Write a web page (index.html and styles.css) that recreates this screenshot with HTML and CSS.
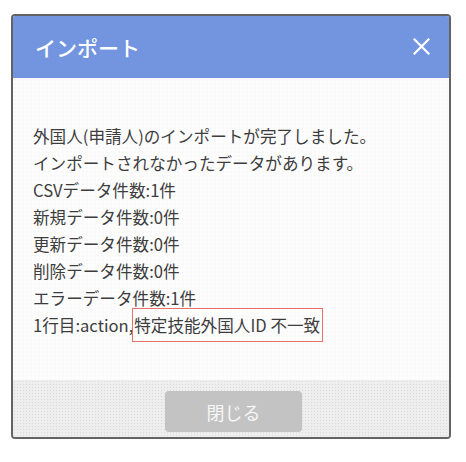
FILE: index.html
```html
<!DOCTYPE html>
<html lang="ja">
<head>
<meta charset="utf-8">
<title>インポート</title>
<link rel="stylesheet" href="styles.css">
</head>
<body>
<div class="modal">
  <div class="modal-header">
    <h1 class="modal-title">インポート</h1>
    <button class="close-btn" aria-label="閉じる">
      <svg width="17" height="17" viewBox="0 0 17 17"><path d="M1.5 1.5 L15.5 15.5 M15.5 1.5 L1.5 15.5" stroke="#fff" stroke-width="2.2" stroke-linecap="square" fill="none"/></svg>
    </button>
  </div>
  <div class="modal-body">
    <p class="line">外国人(申請人)のインポートが完了しました。</p>
    <p class="line">インポートされなかったデータがあります。</p>
    <p class="line">CSVデータ件数:1件</p>
    <p class="line">新規データ件数:0件</p>
    <p class="line">更新データ件数:0件</p>
    <p class="line">削除データ件数:0件</p>
    <p class="line">エラーデータ件数:1件</p>
    <p class="line">1行目:action,<span class="error">特定技能外国人ID 不一致</span></p>
  </div>
  <div class="modal-footer">
    <button class="btn-close">閉じる</button>
  </div>
</div>
</body>
</html>
```

FILE: styles.css
```css
* { box-sizing: border-box; }
html, body { margin: 0; padding: 0; background: #fff; }
body {
  font-family: "Noto Sans CJK JP", "Noto Sans", sans-serif;
  padding: 14px 0 0 11px;
}
.modal {
  width: 440px;
  border: 2px solid #636363;
  border-radius: 4px;
  overflow: hidden;
  background: #fdfdfd;
}
.modal-header {
  height: 62px;
  background: #7395e0;
  display: flex;
  align-items: center;
  justify-content: space-between;
  padding: 0 19px 0 22px;
}
.modal-title {
  margin: 0;
  color: #fff;
  font-size: 21px;
  font-weight: 500;
  line-height: 1;
}
.close-btn {
  border: 0;
  background: none;
  padding: 0;
  width: 17px;
  height: 17px;
  display: flex;
  margin-top: -2px;
}
.modal-body {
  height: 302px;
  padding: 45px 20px 0 20px;
  background: #fdfdfd;
  background-image: radial-gradient(#f2f2f4 0.6px, transparent 0.8px);
  background-size: 4px 4px;
}
.line {
  margin: 0;
  font-size: 16.6px;
  line-height: 27px;
  color: #3d3d3d;
  white-space: nowrap;
}
.error {
  border: 1px solid #e8716c;
  padding: 4px 2px 4px 1px;
  margin-left: -1px;
}
.modal-footer {
  height: 57px;
  background: #eeeeee;
  background-image: radial-gradient(#d9d9d9 0.6px, transparent 0.9px);
  background-size: 3px 3px;
  display: flex;
  justify-content: center;
  align-items: flex-start;
  padding: 11px 0 0 5px;
}
.btn-close {
  width: 137px;
  height: 41px;
  border: 0;
  border-radius: 4px;
  background: #c3c3c3;
  color: #f7f7f7;
  font-family: "Noto Sans CJK JP", "Noto Sans", sans-serif;
  font-size: 18px;
  padding: 0;
}
```
